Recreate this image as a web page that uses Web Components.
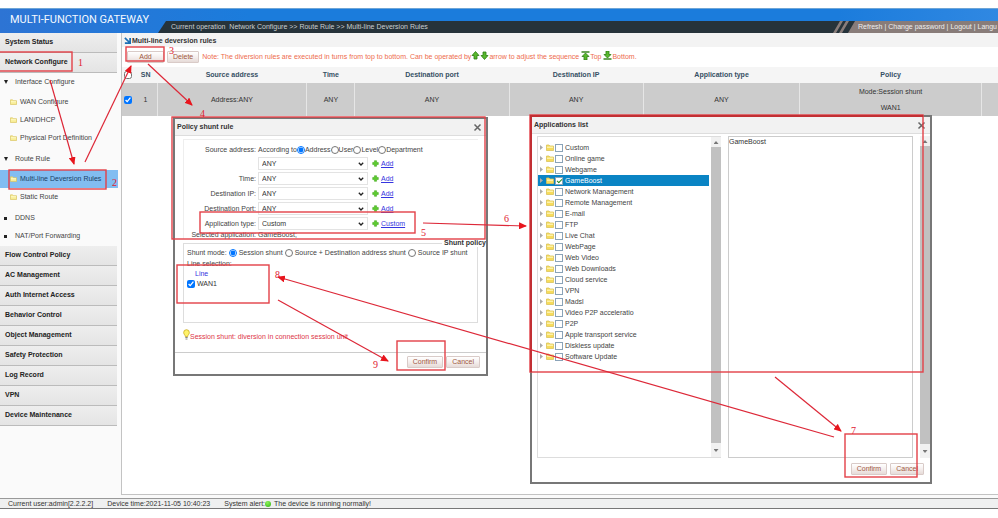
<!DOCTYPE html>
<html lang="en">
<head>
<meta charset="utf-8">
<title>Multi-Function Gateway</title>
<style>
body{margin:0;font:7px/10px "Liberation Sans",Arial,sans-serif;color:#333;background:#fff}
</style>
</head>
<body>
<gateway-app></gateway-app>
<script>
function define(name, html, setup){
  customElements.define(name, class extends HTMLElement{
    constructor(){
      super();
      const t=document.createElement('template');
      t.innerHTML=typeof html==='function'?html(this):html;
      this.attachShadow({mode:'open'}).append(t.content.cloneNode(true));
      if(setup) setup(this);
    }
  });
}
const folder=`<svg viewBox="0 0 8 7" aria-hidden="true"><path d="M.5 6.500v-5.500h2.500l1 1h3.500v4.500z" fill="#f8ed96" stroke="#d9c35c" stroke-width=".8"/><path d="M1 3.200h6" stroke="#fffbd0"/></svg>`;
const plus=`<svg class="plus" viewBox="0 0 8 8" aria-hidden="true"><path d="M2.800.8h2.400v2h2v2.400h-2v2H2.800v-2h-2V2.800h2z" fill="#5ccc2e" stroke="#3ca514" stroke-width=".6"/></svg>`;

define('push-button',`<style>
:host{display:inline-flex}
button{flex:1;font:inherit;color:#a1583f;height:12px;padding:0 5px;border:1px solid #d9cbc8;border-radius:1px;background:linear-gradient(#fff,#f5efee 50%,#e6dbd8);white-space:nowrap;line-height:10px}
</style><button type="button"><slot></slot></button>`);

define('top-bar',`<style>
:host{display:block;height:25px;box-sizing:border-box;background:linear-gradient(90deg,#2d74d4,#1b7cdc 25%,#1b7cdc 84%,#3088e2);border-top:1px solid #6ea5d6}
.row{display:flex;height:24px;align-items:flex-end}
.brand{flex:0 0 158px;min-width:0;align-self:stretch;box-sizing:border-box;padding-left:10px;color:#f4f9ff;font:11px/22px Roboto,sans-serif;white-space:nowrap}
.strip{flex:1;min-width:0;height:12px;display:flex;background:#26333a;clip-path:polygon(8px 0,100% 0,100% 100%,0 100%);color:#c9ced0;line-height:11px;white-space:nowrap;box-sizing:border-box}
.crumb{flex:1;padding-left:13px}
svg{width:28px;height:12px}
nav{flex:none;background:#887c79;color:#eee;padding-right:1px}
a{color:inherit;text-decoration:none}
</style>
<div class="row"><div class="brand">MULTI-FUNCTION GATEWAY</div>
<div class="strip"><div class="crumb">Current operation&nbsp; Network Configure &gt;&gt; Route Rule &gt;&gt; Multi-line Deversion Rules</div>
<svg viewBox="0 0 28 12" aria-hidden="true"><path d="M18 12 25 0h3v12z" fill="#887c79"/><path d="M3 12 10 0h3L6 12zM9 12 16 0h3l-7 12z" fill="#887c79"/></svg>
<nav><a href="#">Refresh</a> | <a href="#">Change password</a> | <a href="#">Logout</a> | <a href="#">Langu</a></nav></div></div>`);

define('nav-section',h=>`<style>
:host{display:block}
a{display:block;height:20px;line-height:18px;box-sizing:border-box;padding-left:5px;margin-right:1px;background:linear-gradient(#eee,#e4e4e4);border-bottom:1px solid #bbb;color:#222;font-weight:bold;text-decoration:none}
</style><a href="#">${h.getAttribute('label')}</a><slot></slot>`);

define('nav-tree',`<style>
:host{display:block;padding-bottom:1px}
ul{list-style:none;margin:0;padding:0}
ul ul{margin:2px 0 3px}
a{display:flex;align-items:center;height:18px;color:#444;text-decoration:none;gap:7px;padding-left:4px}
ul ul a{padding-left:10px;gap:3px}
ul ul svg{width:7px;height:6px}
.mark{width:4px;height:4px;display:block}
.sq{background:#222;width:3px;height:3px;margin-right:1px}
.tri{background:#222;clip-path:polygon(0 0,100% 0,50% 100%)}
.on{background:#82bdf1;color:#1c4266}
</style><ul>
<li><a href="#"><span class="mark tri"></span>Interface Configure</a><ul><li><a href="#">${folder}WAN Configure</a></li><li><a href="#">${folder}LAN/DHCP</a></li><li><a href="#">${folder}Physical Port Definition</a></li></ul></li>
<li><a href="#"><span class="mark tri"></span>Route Rule</a><ul><li><a class="on" href="#" aria-current="page">${folder}Multi-line Deversion Rules</a></li><li><a href="#">${folder}Static Route</a></li></ul></li>
<li><a href="#"><span class="mark sq"></span>DDNS</a></li><li><a href="#"><span class="mark sq"></span>NAT/Port Forwarding</a></li></ul>`);

define('side-menu',`<style>:host{display:block;background:#fafafa}</style>
<nav-section label="System Status"></nav-section><nav-section label="Network Configure"><nav-tree></nav-tree></nav-section>
${['Flow Control Policy','AC Management','Auth Internet Access','Behavior Control','Object Management','Safety Protection','Log Record','VPN','Device Maintenance'].map(x=>`<nav-section label="${x}"></nav-section>`).join('')}`);

const arrow=(d,bar)=>`<svg class="arr" viewBox="0 0 9 9" aria-hidden="true"><g ${d==='down'?'transform="rotate(180 4.500 4.500)"':''}><path d="M4.500 ${bar?2:.5} 8 ${bar?5.500:4.500}H6v3.500H3V${bar?5.500:4.500}H1z" fill="#59b82e" stroke="#2c7d12" stroke-width=".8"/>${bar?'<path d="M.5 1h8" stroke="#2c7d12" stroke-width="1.400"/>':''}</g></svg>`;
define('rules-panel',`<style>
:host{display:block;border:solid #c3c3c3;border-width:0 0 1px 1px;background:#fff}
h1{display:flex;align-items:center;gap:1px;font:bold 7px/13px "Liberation Sans",Arial,sans-serif;margin:0;padding:1px 0 0 2px;height:13px;background:#f3f3f3;color:#333}
h1 svg{width:7px;height:7px}
.tools{display:flex;align-items:center;height:20px;gap:3px;padding-left:5px;white-space:nowrap;color:#ee6b4d}
.add{width:37px}
.note{display:flex;align-items:center}
.arr{width:9px;height:9px;margin:-4px 0 0}
table{width:100%;table-layout:fixed;border-collapse:collapse}
th{height:16px;padding:0;background:#f5f5f5;color:#365064;text-align:center}
td{height:33px;padding:0;background:#ccc;text-align:center;line-height:16px;color:#333}
td+td+td{border-left:1px solid #e6e6e6}
input{width:8px;height:8px;margin:0;display:block;margin-left:2px}
</style>
<h1><svg viewBox="0 0 8 8" aria-hidden="true"><path d="m1 1 5 5M7 1v6H1" fill="none" stroke="#1c6fb5" stroke-width="2"/></svg>Multi-line deversion rules</h1>
<div class="tools"><push-button class="add">Add</push-button><push-button>Delete</push-button><div class="note">Note: The diversion rules are executed in turns from top to bottom. Can be operated by${arrow('up')}${arrow('down')}arrow to adjust the sequence&nbsp;${arrow('up',1)}Top&nbsp;${arrow('down',1)}Bottom.</div></div>
<table><colgroup><col style="width:1.4%"><col style="width:2.600%"><col style="width:17.100%"><col style="width:5.500%"><col style="width:17.600%"><col style="width:15.300%"><col style="width:17.900%"><col style="width:20.700%"><col></colgroup>
<thead><tr><th><input type="checkbox" aria-label="Select all"></th><th>SN</th><th>Source address</th><th>Time</th><th>Destination port</th><th>Destination IP</th><th>Application type</th><th>Policy</th><th></th></tr></thead>
<tbody><tr><td><input type="checkbox" checked aria-label="Select rule 1"></td><td>1</td><td>Address:ANY</td><td>ANY</td><td>ANY</td><td>ANY</td><td>ANY</td><td>Mode:Session shunt<br>WAN1</td><td></td></tr></tbody></table>`);

define('status-bar',`<style>
:host{display:flex;box-sizing:border-box;height:11px;line-height:10px;gap:14px;padding-left:8px;background:#eff0f0;border-top:1px solid #999;border-bottom:1px solid #777;white-space:nowrap}
span{display:flex;align-items:center}
i{width:6px;height:6px;border-radius:50%;background:radial-gradient(circle at 40% 30%,#8df05a,#2eb512);margin:0 3px 0 0}
</style><span>Current user:admin[2.2.2.2]</span><span>Device time:2021-11-05 10:40:23</span><span>System alert:<i></i>The device is running normally!</span>`);

define('tool-window',h=>`<style>
:host{display:flex;flex-direction:column;box-sizing:border-box;border:2px solid #777;background:#fff}
header{display:flex;align-items:center;justify-content:space-between;height:16px;padding:0 4px 0 2px;background:#f2f2f2;border-bottom:1px solid #ddd;flex:none}
h2{font:bold 7px/16px "Liberation Sans",Arial,sans-serif;margin:0;color:#333}
button{border:0;background:none;padding:0;width:9px;height:9px;color:#555}
svg{display:block;width:9px;height:9px}
.body{flex:1;min-height:0}
footer{display:flex;align-items:flex-start;justify-content:flex-end;gap:3px;flex:none;height:22px;padding:3px 6px 0 0;box-sizing:border-box}
:host([ruled]) footer{border-top:1px solid #ccc}
</style><header><h2>${h.getAttribute('heading')}</h2><button type="button" aria-label="Close"><svg viewBox="0 0 9 9"><path d="m1.500 1.500 6 6m0-6-6 6" stroke="#666" stroke-width="1.500"/></svg></button></header>
<div class="body"><slot></slot></div><footer><slot name="actions"></slot></footer>`);

const field=(id,label,val,link)=>`<label class="l" for="${id}">${label}</label><span class="sel"><select id="${id}"><option>${val}</option></select><svg viewBox="0 0 6 4" aria-hidden="true"><path d="m.8.8 2.200 2.200L5.200.8" fill="none" stroke="#222" stroke-width="1.300"/></svg></span><span class="lk">${plus}<a href="#">${link}</a></span>`;
define('policy-form',`<style>
:host{display:block;padding:3px 8px 0;color:#444}
.grid{display:grid;grid-template-columns:72px 110px 1fr;grid-template-rows:12px repeat(5,15px) 8px;column-gap:2px;align-items:center;border:solid #eee;border-width:1px 0 0 1px;padding-top:4px}
.l{text-align:right;white-space:nowrap}
.radios{grid-column:2/4;display:flex;align-items:center;white-space:nowrap}
label{display:inline-flex;align-items:center;justify-content:flex-end}
input{width:8px;height:8px;margin:0}
.sel{position:relative;display:block;height:13px}
select{appearance:none;width:100%;height:13px;box-sizing:border-box;border:1px solid #e3e3e3;border-radius:0;background:#fff;font:inherit;color:#333;padding:0 3px}
.sel svg{position:absolute;right:4px;top:5px;width:6px;height:4px}
.lk{display:flex;align-items:center;gap:2px;padding-left:2px}
.plus{width:7px;height:7px}
a{color:#3535e0}
.short{line-height:8px}
fieldset{margin:0;border:1px solid #ddd;padding:0 3px;height:84px;box-sizing:border-box;min-width:0}
legend{margin-left:auto;margin-right:-12px;padding:0 0 0 2px;font-weight:bold;line-height:8px;color:#333}
.mode{display:flex;align-items:center;height:11px;white-space:nowrap}
.mode input{margin:0 2px}
.line{height:10px;line-height:11px}
.line a{text-decoration:none;margin-left:8px}
.wan{gap:2px;margin-top:1px;color:#333}
.tip{display:flex;align-items:center;margin:6px 0 0;color:#dd3547;height:16px}
.tip svg{width:7px;height:11px;align-self:flex-start}
</style>
<div class="grid"><span class="l">Source address:</span><div class="radios" role="radiogroup" aria-label="Source address">According to<label><input type="radio" name="src" checked>Address</label><label><input type="radio" name="src">User</label><label><input type="radio" name="src">Level</label><label><input type="radio" name="src">Department</label></div>
${field('addr','','ANY','Add').replace('<select','<select aria-label="Address"')}${field('time','Time:','ANY','Add')}${field('ip','Destination IP:','ANY','Add')}${field('port','Destination Port:','ANY','Add')}${field('app','Application type:','Custom','Custom')}
<span class="l short">Selected application:</span><span class="short">GameBoost;</span></div>
<fieldset><legend>Shunt policy</legend><div class="mode">Shunt mode:<label><input type="radio" name="mode" checked>Session shunt</label><label><input type="radio" name="mode">Source + Destination address shunt</label><label><input type="radio" name="mode">Source IP shunt</label></div>
<div class="line">Line selection:</div><div class="line"><a href="#">Line</a></div><label class="wan"><input type="checkbox" checked>WAN1</label></fieldset>
<p class="tip"><svg viewBox="0 0 7 11" aria-hidden="true"><path d="M2.300 7.500C2.300 6 .7 5.500.7 3.500a2.800 2.800 0 0 1 5.600 0c0 2-1.600 2.500-1.600 4z" fill="#fff36b" stroke="#c9a91e" stroke-width=".8"/><path d="M2.300 8.500h2.400M2.500 10h2" stroke="#888"/></svg>Session shunt: diversion in connection session unit</p>`);

define('scroll-rail',`<style>
:host{display:flex;flex-direction:column;width:10px;background:#f1f1f1}
i{display:block;height:10px;flex:none}
i::before{content:"";display:block;width:5px;height:3px;margin:4px auto 0;background:#777;clip-path:polygon(50% 0,100% 100%,0 100%)}
i,.d{overflow:hidden}
b{flex:1;background:#c1c1c1}
.d{height:14px}
.d::before{margin-top:6px;clip-path:polygon(0 0,100% 0,50% 100%)}
</style><i></i><b></b><i class="d"></i>`);

define('apps-picker',`<style>
:host{display:flex;height:100%;padding:2px 0 2px 5px;box-sizing:border-box;gap:7px}
.tree{flex:1;display:flex;border:1px solid #ddd;border-right:0;box-sizing:border-box;min-width:0}
ul{list-style:none;margin:0;padding:5px 2px 0 0;flex:1}
li{display:flex;align-items:center;height:11px;padding-left:2px;color:#444}
li svg{width:8px;height:7px;margin:0 1px 0 3px}
.t{width:3px;height:5px;background:#aaa;clip-path:polygon(0 0,100% 50%,0 100%)}
label{display:flex;align-items:center;gap:2px;line-height:11px}
input{appearance:none;width:8px;height:8px;margin:0;border:1px solid #8aa3b8;background:#fff;box-sizing:border-box;display:grid;place-items:center}
input:checked::after{content:"";width:4px;height:2px;border:solid #2a8c24;border-width:0 0 1px 1px;transform:rotate(-45deg)}
.on{background:#0a84c4;color:#fff}
textarea{flex:1;min-width:0;box-sizing:border-box;resize:none;border:1px solid #ccc;margin:0;padding:0;font:inherit;color:#333;overflow:hidden;outline:0}
</style><div class="tree"><ul>${['Custom','Online game','Webgame','GameBoost','Network Management','Remote Management','E-mail','FTP','Live Chat','WebPage','Web Video','Web Downloads','Cloud service','VPN','Madsl','Video P2P acceleratio','P2P','Apple transport service','Diskless update','Software Update'].map((x,i)=>`<li${i===3?' class="on"':''}><span class="t"></span>${folder.replace('#f8ed96','#f7dc5c')}<label><input type="checkbox"${i===3?' checked':''}>${x}</label></li>`).join('')}</ul><scroll-rail></scroll-rail></div>
<textarea aria-label="Selected applications">GameBoost</textarea><scroll-rail></scroll-rail>`);

const rects=[[-1,52,73,19],[9,170,97,19],[126,47,38,14],[172,117,313,122],[200,212,215,21],[177,265,92,38],[397,341,48,29],[530,115,393,257],[845,434,72,43]];
const lines=[[50,80,74,164],[85,162,131,66],[148,64,192,105],[423,223,526,226],[775,377,841,431],[834,437,278,277],[278,300,388,361]];
const nums=[[78,66,1],[112,186,2],[169,54,3],[200,117,4],[421,236,5],[504,222,6],[851,434,7],[275,278,8],[373,368,9]];
define('step-marks',`<style>
:host{display:block;pointer-events:none}
svg{display:block;width:100%;height:100%;overflow:hidden}
text{font:10px "Liberation Serif",serif;fill:#e02030}
</style><svg aria-label="Numbered steps"><defs><marker id="h" markerUnits="userSpaceOnUse" markerWidth="8" markerHeight="7" refX="7" refY="3.500" orient="auto"><path d="M0 0 8 3.500 0 7z" fill="#e8151d"/></marker></defs>
<g fill="none" stroke="#e34048" stroke-width="1.400">${rects.map(r=>`<rect x="${r[0]}" y="${r[1]}" width="${r[2]}" height="${r[3]}"/>`).join('')}<path d="M531 372V116H923" stroke="#c22f33" stroke-width="2"/></g>
<g stroke="#dd2838" stroke-width="1.200">${lines.map(l=>`<line x1="${l[0]}" y1="${l[1]}" x2="${l[2]}" y2="${l[3]}" marker-end="url(#h)"/>`).join('')}</g>
${nums.map(n=>`<text x="${n[0]}" y="${n[1]}">${n[2]}</text>`).join('')}</svg>`);

define('gateway-app',`<style>
:host{display:flex;flex-direction:column;min-height:100vh;box-sizing:border-box;padding:8px 0 9px;position:relative;overflow:hidden}
.main{flex:1;display:grid;grid-template-columns:118px 1fr;column-gap:3px;background:#fafafa}
rules-panel{margin-bottom:3px;min-width:0}
.policy,.apps,step-marks{position:absolute}
.policy{left:173px;top:117px;width:315px;height:259px}
.apps{left:530px;top:115px;width:402px;height:369px}
step-marks{inset:0}
</style>
<top-bar></top-bar><div class="main"><side-menu></side-menu><rules-panel></rules-panel></div><status-bar></status-bar>
<tool-window class="policy" heading="Policy shunt rule" ruled role="dialog" aria-label="Policy shunt rule"><policy-form></policy-form><push-button slot="actions">Confirm</push-button><push-button slot="actions">Cancel</push-button></tool-window>
<tool-window class="apps" heading="Applications list" role="dialog" aria-label="Applications list"><apps-picker></apps-picker><push-button slot="actions">Confirm</push-button><push-button slot="actions">Cancel</push-button></tool-window>
<step-marks></step-marks>`);
</script>
</body>
</html>
